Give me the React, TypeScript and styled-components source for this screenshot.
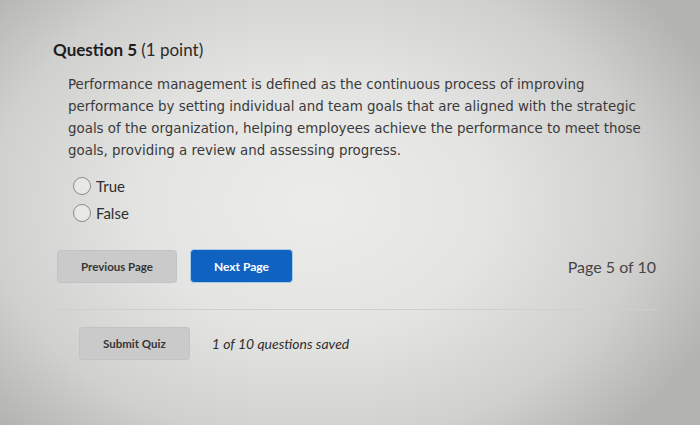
import React, { useState } from 'react';
import styled, { createGlobalStyle } from 'styled-components';

const GlobalStyle = createGlobalStyle`
    html, body {
        margin: 0;
        padding: 0;
    }
    body {
        width: 700px;
        height: 425px;
        overflow: hidden;
        background: radial-gradient(ellipse 62% 75% at 45% 48%, #ececea 0%, #e4e4e2 40%, #d0d0ce 75%, #b3b3b2 100%);
        font-family: Lato, "Open Sans", sans-serif;
    }
`;

const Page = styled.div`
    width: 700px;
    height: 425px;
    padding: 38px 44px 0 53px;
    box-sizing: border-box;
    display: flex;
    flex-direction: column;
`;

const Heading = styled.h2`
    margin: 0;
    font-family: Lato, sans-serif;
    font-size: 17px;
    font-weight: 700;
    color: #1d1d1d;
    line-height: 24px;

    span {
        font-weight: 400;
        color: #2a2a2a;
    }
`;

const Prompt = styled.p`
    margin: 12px 0 0 15px;
    width: 585px;
    font-family: "DejaVu Sans", Verdana, sans-serif;
    font-size: 13.4px;
    line-height: 22px;
    color: #3a3a3a;
`;

const Options = styled.div`
    display: flex;
    flex-direction: column;
    gap: 7px;
    margin: 14px 0 0 20px;
`;

const Option = styled.label`
    display: flex;
    align-items: center;
    gap: 5px;
    font-family: Lato, sans-serif;
    font-size: 15px;
    color: #2e2e2e;
    height: 20px;
    cursor: pointer;
`;

const Radio = styled.span<{ $checked: boolean }>`
    width: 18px;
    height: 18px;
    border-radius: 50%;
    border: 1px solid #8a8a8a;
    background: ${p => (p.$checked ? 'radial-gradient(circle, #333 35%, #f4f4f4 40%)' : 'rgba(255,255,255,0.35)')};
    box-sizing: border-box;
`;

const NavRow = styled.div`
    display: flex;
    align-items: center;
    gap: 13px;
    margin: 26px 0 0 4px;
`;

const GreyButton = styled.button`
    height: 33px;
    padding: 0 24px;
    border: none;
    border-radius: 4px;
    background: #cacaca;
    font-family: Lato, sans-serif;
    font-weight: 700;
    font-size: 11.5px;
    color: #363636;
    box-shadow: inset 0 0 0 1px rgba(0, 0, 0, 0.03);
`;

const BlueButton = styled.button`
    height: 34px;
    padding: 0 23px;
    border: 1px solid #a9cbea;
    border-radius: 4px;
    background: #0f62c0;
    font-family: Lato, sans-serif;
    font-weight: 700;
    font-size: 12px;
    color: #ffffff;
`;

const PageCount = styled.div`
    margin-left: auto;
    font-family: Lato, sans-serif;
    font-size: 16px;
    color: #464646;
`;

const Divider = styled.hr`
    margin: 26px 0 0 0;
    width: 603px;
    border: none;
    border-top: 1px solid #cfcfcd;
`;

const SubmitRow = styled.div`
    display: flex;
    align-items: center;
    gap: 22px;
    margin: 17px 0 0 26px;
`;

const Saved = styled.span`
    font-family: Lato, sans-serif;
    font-style: italic;
    font-size: 14px;
    color: #2f2f2f;
`;

const App = () => {
    const [answer, setAnswer] = useState<string | null>(null);

    return (
        <>
            <GlobalStyle />
            <Page>
                <Heading>Question 5 <span>(1 point)</span></Heading>
                <Prompt>
                    Performance management is defined as the continuous process of improving
                    performance by setting individual and team goals that are aligned with the strategic
                    goals of the organization, helping employees achieve the performance to meet those
                    goals, providing a review and assessing progress.
                </Prompt>
                <Options>
                    {['True', 'False'].map(opt => (
                        <Option key={opt} onClick={() => setAnswer(opt)}>
                            <Radio $checked={answer === opt} />
                            {opt}
                        </Option>
                    ))}
                </Options>
                <NavRow>
                    <GreyButton>Previous Page</GreyButton>
                    <BlueButton>Next Page</BlueButton>
                    <PageCount>Page 5 of 10</PageCount>
                </NavRow>
                <Divider />
                <SubmitRow>
                    <GreyButton>Submit Quiz</GreyButton>
                    <Saved>1 of 10 questions saved</Saved>
                </SubmitRow>
            </Page>
        </>
    );
};

export default App;
